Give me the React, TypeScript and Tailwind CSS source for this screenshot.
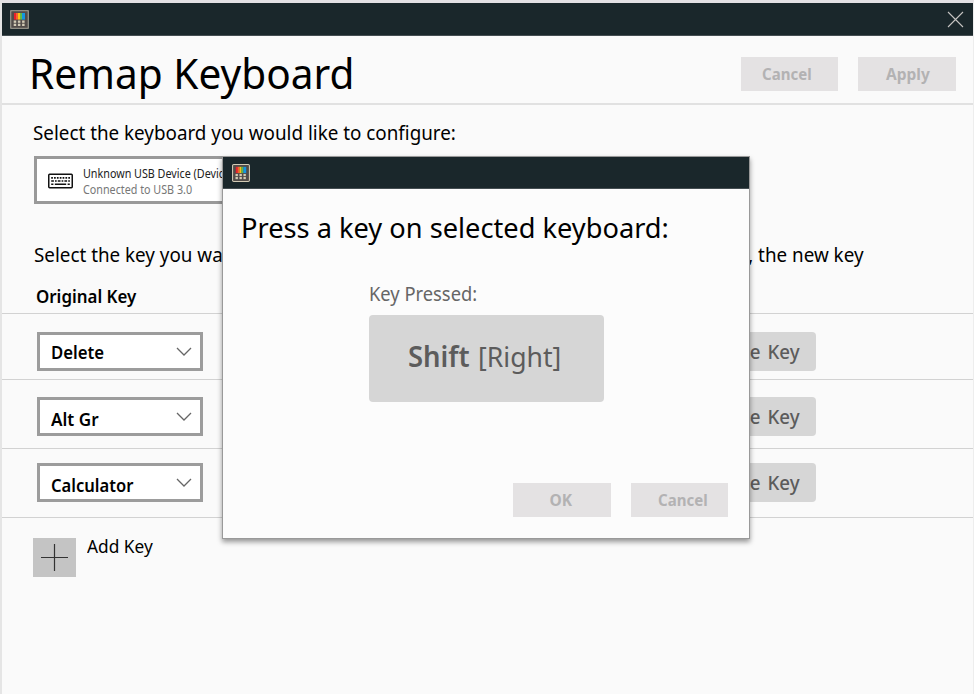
import type { ReactNode } from "react";

function ToysIcon({ dim = false }: { dim?: boolean }) {
  const frame = dim ? "#8f8d83" : "#d3cbb5";
  const keys = [4, 8.2, 12.4];
  return (
    <svg className={"block shrink-0 " + (dim ? "size-[19px]" : "size-[18px]")} viewBox="0 0 19 19">
      <rect x="0.6" y="0.6" width="17.8" height="17.8" rx="1.2" fill="#524c49" stroke={frame} strokeWidth={dim ? 1.5 : 1.1} />
      <rect x="4" y="3" width="2.2" height="6.6" fill="#e8202c" />
      <rect x="6" y="3" width="2" height="6.6" fill="#f4622d" />
      <rect x="8" y="3" width="2" height="6.6" fill="#f8c413" />
      <rect x="10" y="3" width="2" height="6.6" fill="#62b847" />
      <rect x="12" y="3" width="3" height="6.6" fill="#1496e0" />
      {keys.map((x) => (
        <g key={x} fill="#d3cbb5">
          <rect x={x - 0.3} y="10.5" width="2.5" height="2.3" />
          <rect x={x - 0.3} y="13.7" width="2.5" height="2.3" />
        </g>
      ))}
    </svg>
  );
}

function KeyboardIcon() {
  return (
    <svg className="mt-[2px] block h-4 w-[25px] shrink-0" viewBox="0 0 25 16">
      <rect x="0.75" y="1.25" width="23.5" height="13.5" rx="0.9" fill="none" stroke="#111" strokeWidth="1.5" />
      <path d="M3.2 4.9H22" stroke="#111" strokeWidth="1.6" strokeDasharray="1.7 1.15" />
      <path d="M3.2 8H22" stroke="#111" strokeWidth="1.6" strokeDasharray="2.7 1.1 1.7 1.1" />
      <path d="M3.2 11.2H5.4M6.8 11.2H18.2M19.6 11.2H21.8" stroke="#111" strokeWidth="1.6" />
    </svg>
  );
}

function GreyButton({ label, className }: { label: string; className: string }) {
  return (
    <button className="flex h-[34px] w-[97.5px] items-start bg-[#e4e2e3] pt-[10px] text-left text-[15.5px] leading-none font-bold text-[#b3b2b3]">
      <span className={"block origin-left whitespace-nowrap " + className}>{label}</span>
    </button>
  );
}

function KeyRow({ label, rowClass, labelClass }: { label: string; rowClass: string; labelClass: string }) {
  return (
    <div className={"flex items-start border-t border-[#d2d2d2] pl-[35px] " + rowClass}>
      <div className="flex h-[39px] w-[166px] shrink-0 items-center justify-between border-3 border-[#9c9c9c] bg-white pr-[8px] pl-[11px]">
        <span className={"block origin-left text-[18px] leading-none font-semibold whitespace-nowrap " + labelClass}>{label}</span>
        <svg className="block h-[10px] w-4" viewBox="0 0 16 10">
          <path d="M1 1L8 8L15 1" fill="none" stroke="#666" strokeWidth="1.3" />
        </svg>
      </div>
      <div className="ml-[493px] flex h-[39px] w-[119.5px] items-center justify-end rounded-[4px] bg-[#d6d6d6] pt-px pr-[15.5px] text-[19px] leading-none font-medium text-[#5c5c5c]">
        <span className="block origin-right scale-x-[0.985] whitespace-nowrap [word-spacing:2px]">Type Key</span>
      </div>
    </div>
  );
}

function TitleBar({ children, className }: { children: ReactNode; className: string }) {
  return <div className={"flex items-center justify-between border-b border-[#454e52] bg-[#1a272b] " + className}>{children}</div>;
}

export default function App() {
  return (
    <div className="relative h-[694px] w-[974px] overflow-hidden border-t-[3px] border-r border-l-2 border-t-[#e3e1e4] border-r-[#ededed] border-l-[#e5e5e5] bg-[#fafafa] font-['Noto_Sans','Open_Sans',sans-serif] text-black">
      <TitleBar className="h-[33px]">
        <div className="pl-2"><ToysIcon dim /></div>
        <svg className="mr-[9px] block size-[17px]" viewBox="0 0 17 17">
          <path d="M1 1L16 16M16 1L1 16" stroke="#c6c4c2" strokeWidth="1.1" />
        </svg>
      </TitleBar>

      <header className="flex h-[69px] items-start justify-between border-b-2 border-[#e1e1e1] pr-[17.5px] pl-[27px]">
        <h1 className="origin-left scale-x-[0.966] pt-[16px] text-[42px] leading-none whitespace-nowrap">Remap Keyboard</h1>
        <div className="flex gap-5 pt-[21px]">
          <GreyButton label="Cancel" className="ml-[21.5px] scale-x-[0.97]" />
          <GreyButton label="Apply" className="ml-[28px] scale-x-[1]" />
        </div>
      </header>

      <main>
        <div className="flex h-[51px] items-start pt-[18px] pl-[31px]">
          <p className="origin-left scale-x-[0.965] text-[19.5px] leading-none whitespace-nowrap">Select the keyboard you would like to configure:</p>
        </div>
        <div className="ml-8 flex h-12 w-[425px] items-center border-[3px] border-[#999] bg-white pl-[11px]">
          <KeyboardIcon />
          <div className="flex flex-col gap-[4px] pt-[4px] pl-[10px] text-[12px] leading-none whitespace-nowrap">
            <span className="block origin-left scale-x-[0.896] text-[#222]">Unknown USB Device (Device Descriptor)</span>
            <span className="block origin-left scale-x-[0.896] text-[#777]">Connected to USB 3.0</span>
          </div>
        </div>
        <div className="flex h-[83px] items-start justify-between pt-[41px] pr-[110px] pl-8 text-[19.5px] leading-none whitespace-nowrap">
          <p className="origin-left scale-x-[0.965]">Select the key you want</p>
          <p className="origin-right scale-x-[0.965]">, the new key</p>
        </div>
        <div className="flex h-[26px] items-start pt-px pl-[34px]">
          <h2 className="origin-left scale-x-[0.965] text-[17.5px] leading-none font-semibold whitespace-nowrap">Original Key</h2>
        </div>

        <KeyRow label="Delete" rowClass="h-[66px] pt-[18px]" labelClass="scale-x-[0.93]" />
        <KeyRow label="Alt Gr" rowClass="h-[69px] pt-[17px]" labelClass="scale-x-[0.95] pt-[4px]" />
        <KeyRow label="Calculator" rowClass="h-[69px] pt-[14px]" labelClass="scale-x-[0.92] pt-[4px]" />
        <div className="flex items-start border-t border-[#d2d2d2] pt-[20px] pl-[31px]">
          <button className="flex h-[39px] w-[43px] items-center justify-center bg-[#c4c4c4]">
            <svg className="block size-[27px]" viewBox="0 0 27 27">
              <path d="M0 13.5H27M13.5 0V27" stroke="#333" strokeWidth="1.2" />
            </svg>
          </button>
          <span className="-mt-px ml-[10.5px] block origin-left scale-x-[0.96] text-[18px] leading-none whitespace-nowrap">Add Key</span>
        </div>
      </main>

      <section className="absolute top-[153px] left-[220px] h-[383px] w-[528px] border border-[#999] bg-[#fcfcfc] shadow-[0_3px_5px_rgba(0,0,0,0.4)]">
        <TitleBar className="h-[32px]">
          <div className="pl-[9px]"><ToysIcon /></div>
        </TitleBar>
        <div className="flex pt-[24px] pl-[18px]">
          <h2 className="origin-left scale-x-[0.972] text-[28px] leading-none whitespace-nowrap">Press a key on selected keyboard:</h2>
        </div>
        <div className="pt-[44px] pl-[146px]">
          <div className="flex">
            <p className="origin-left scale-x-[0.965] text-[19px] leading-none whitespace-nowrap text-[#666]">Key Pressed:</p>
          </div>
          <div className="mt-[11px] flex h-[87px] w-[235px] items-start rounded-[4px] bg-[#d6d6d6] pt-[27px] pl-[39px] text-[28px] leading-none whitespace-nowrap text-[#5c5c5c]">
            <span className="block w-[70px] origin-left scale-x-[0.98] font-semibold">Shift</span>
            <span className="block origin-left scale-x-[0.95]">[Right]</span>
          </div>
        </div>
        <div className="flex gap-5 pt-[81px] pl-[290px]">
          <GreyButton label="OK" className="ml-[36.5px] scale-x-[1]" />
          <GreyButton label="Cancel" className="ml-[27px] scale-x-[0.97]" />
        </div>
      </section>
    </div>
  );
}
